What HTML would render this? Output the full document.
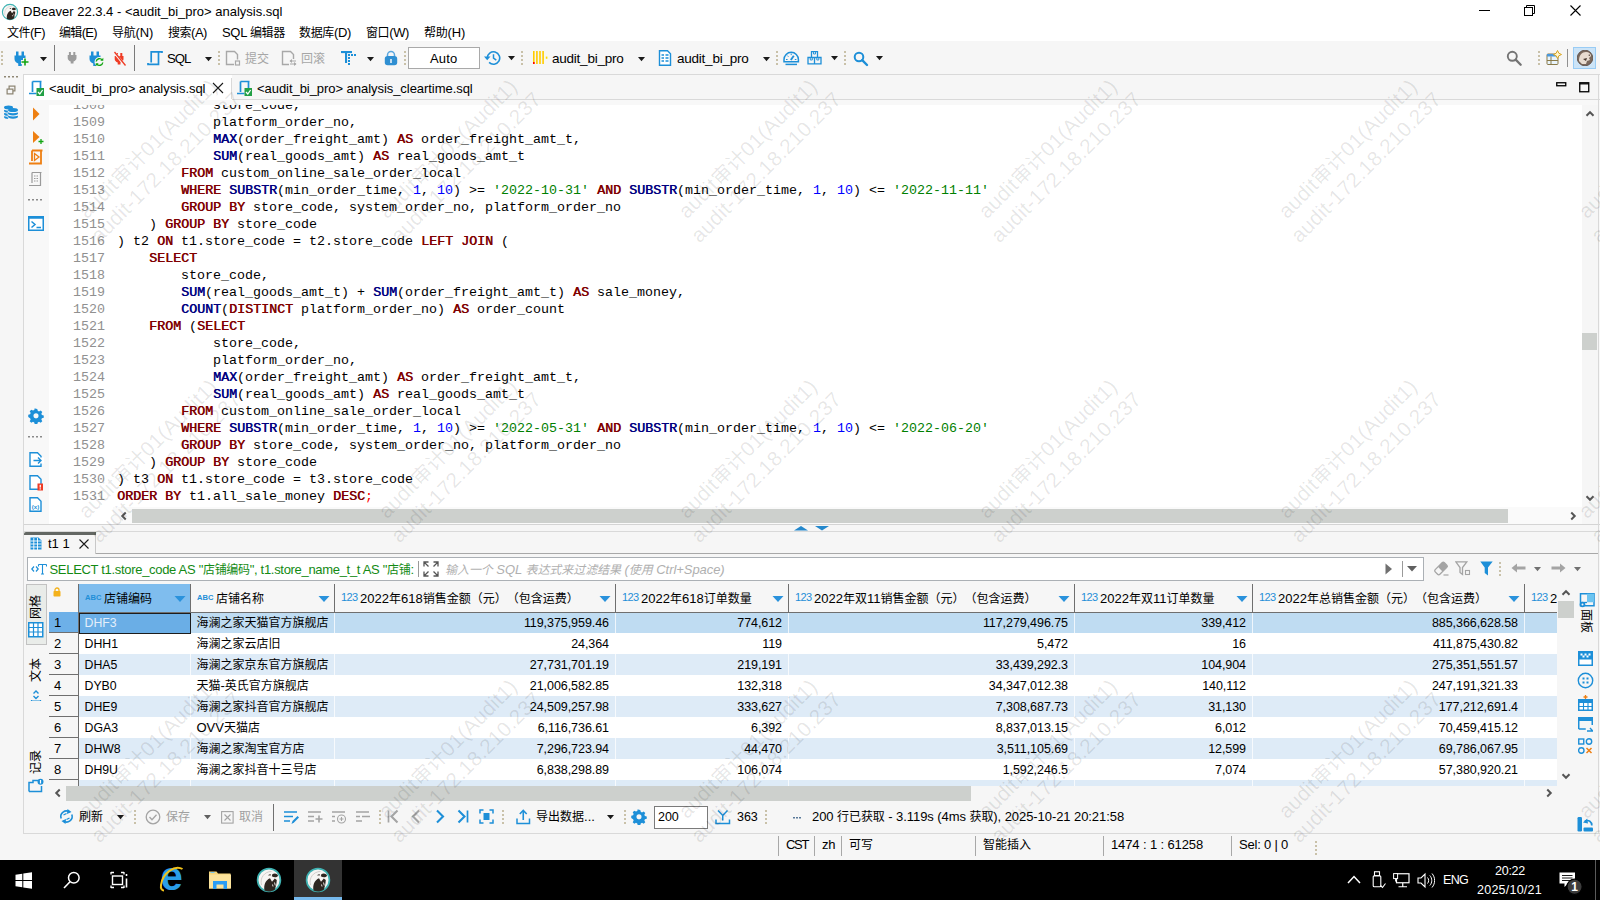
<!DOCTYPE html>
<html lang="zh"><head><meta charset="utf-8"><title>DBeaver 22.3.4 - &lt;audit_bi_pro&gt; analysis.sql</title>
<style>
html,body{margin:0;padding:0}
body{width:1600px;height:900px;overflow:hidden;position:relative;background:#f6f6f6;font-family:"Liberation Sans","Noto Sans CJK SC",sans-serif;font-size:13px;color:#000;text-spacing-trim:space-all}
body div,body svg{position:absolute;box-sizing:border-box}
.t{white-space:pre;font-size:13px}
.c{font-size:12px}
.m{font-family:"Liberation Mono","Noto Sans CJK SC",monospace;font-size:13.333px;white-space:pre}
.kw{color:#7f0000;font-weight:normal;text-shadow:.5px 0 0 currentColor}
.fn{color:#000080;font-weight:normal;text-shadow:.5px 0 0 currentColor}
.nu{color:#0000ff}
.st{color:#008000}
.ln{color:#909090}
.n{font-size:12.5px;letter-spacing:-0.06px}
.wm{width:300px;height:52px;line-height:26px;font-size:20.8px;text-align:center;white-space:pre;color:rgba(0,0,0,.10);transform:rotate(-45deg);letter-spacing:0.3px}
.wc{font-size:20px}

</style></head>
<body>
<!-- title + menu -->
<div style="left:0px;top:0px;width:1600px;height:41px;background:#fff"></div>
<div class="t" style="left:23px;top:2px;height:20px;line-height:20px;letter-spacing:0px">DBeaver 22.3.4 - &lt;audit_bi_pro&gt; analysis.sql</div>
<div class="t" style="left:7px;top:23px;height:20px;line-height:20px;letter-spacing:-0.53px;"><span class="c">文件</span>(F)</div>
<div class="t" style="left:59px;top:23px;height:20px;line-height:20px;letter-spacing:-0.67px;"><span class="c">编辑</span>(E)</div>
<div class="t" style="left:112px;top:23px;height:20px;line-height:20px;letter-spacing:-0.21px;"><span class="c">导航</span>(N)</div>
<div class="t" style="left:168px;top:23px;height:20px;line-height:20px;letter-spacing:-0.47px;"><span class="c">搜索</span>(A)</div>
<div class="t" style="left:222px;top:23px;height:20px;line-height:20px;letter-spacing:-0.31px;">SQL <span class="c">编辑器</span></div>
<div class="t" style="left:299px;top:23px;height:20px;line-height:20px;letter-spacing:-0.34px;"><span class="c">数据库</span>(D)</div>
<div class="t" style="left:366px;top:23px;height:20px;line-height:20px;letter-spacing:-0.39px;"><span class="c">窗口</span>(W)</div>
<div class="t" style="left:424px;top:23px;height:20px;line-height:20px;letter-spacing:-0.21px;"><span class="c">帮助</span>(H)</div>
<!-- toolbar -->
<div style="left:23px;top:74px;width:1577px;height:1px;background:#d9d9d9"></div>
<!-- editor tabs -->
<div style="left:24px;top:75px;width:208px;height:25px;background:#fff"></div>
<div style="left:232px;top:99px;width:1368px;height:1px;background:#d9d9d9"></div>
<div style="left:231px;top:78px;width:1px;height:21px;background:#d9d9d9"></div>
<div class="t" style="left:49px;top:78.6px;height:20px;line-height:20px;letter-spacing:-0.04px;">&lt;audit_bi_pro&gt; analysis.sql</div>
<div class="t" style="left:257px;top:78.6px;height:20px;line-height:20px;letter-spacing:-0.05px;">&lt;audit_bi_pro&gt; analysis_cleartime.sql</div>
<!-- editor -->
<div style="left:23px;top:75px;width:1px;height:759px;background:#d9d9d9"></div>
<div style="left:24px;top:100px;width:1576px;height:424px;background:#f8f8f8"></div>
<div style="left:49px;top:105px;width:1533px;height:402px;background:#fff"></div>
<div style="left:49px;top:507px;width:1533px;height:17px;background:#fff"></div>
<div style="left:1582px;top:105px;width:17px;height:419px;background:#f6f6f6"></div>
<!-- result panel -->
<div style="left:24px;top:531px;width:1576px;height:1px;background:#d9d9d9"></div>
<div style="left:95px;top:553px;width:1504px;height:1px;background:#a8a8a8"></div>
<div style="left:24px;top:833px;width:1576px;height:1px;background:#d9d9d9"></div>
<!-- status bar -->
<!-- taskbar -->
<div style="left:0px;top:860px;width:1600px;height:40px;background:#000"></div>
<!-- code -->
<div style="left:49px;top:105px;width:1533px;height:402px;overflow:hidden">
<div class="m ln" style="left:24px;top:-8.5px;height:17px;line-height:17px">1508</div><div class="m" style="left:68px;top:-8.5px;height:17px;line-height:17px">            store_code,</div>
<div class="m ln" style="left:24px;top:8.5px;height:17px;line-height:17px">1509</div><div class="m" style="left:68px;top:8.5px;height:17px;line-height:17px">            platform_order_no,</div>
<div class="m ln" style="left:24px;top:25.5px;height:17px;line-height:17px">1510</div><div class="m" style="left:68px;top:25.5px;height:17px;line-height:17px">            <b class="fn">MAX</b>(order_freight_amt) <b class="kw">AS</b> order_freight_amt_t,</div>
<div class="m ln" style="left:24px;top:42.5px;height:17px;line-height:17px">1511</div><div class="m" style="left:68px;top:42.5px;height:17px;line-height:17px">            <b class="fn">SUM</b>(real_goods_amt) <b class="kw">AS</b> real_goods_amt_t</div>
<div class="m ln" style="left:24px;top:59.5px;height:17px;line-height:17px">1512</div><div class="m" style="left:68px;top:59.5px;height:17px;line-height:17px">        <b class="kw">FROM</b> custom_online_sale_order_local</div>
<div class="m ln" style="left:24px;top:76.5px;height:17px;line-height:17px">1513</div><div class="m" style="left:68px;top:76.5px;height:17px;line-height:17px">        <b class="kw">WHERE</b> <b class="fn">SUBSTR</b>(min_order_time, <span class="nu">1</span>, <span class="nu">10</span>) &gt;= <span class="st">'2022-10-31'</span> <b class="kw">AND</b> <b class="fn">SUBSTR</b>(min_order_time, <span class="nu">1</span>, <span class="nu">10</span>) &lt;= <span class="st">'2022-11-11'</span></div>
<div class="m ln" style="left:24px;top:93.5px;height:17px;line-height:17px">1514</div><div class="m" style="left:68px;top:93.5px;height:17px;line-height:17px">        <b class="kw">GROUP</b> <b class="kw">BY</b> store_code, system_order_no, platform_order_no</div>
<div class="m ln" style="left:24px;top:110.5px;height:17px;line-height:17px">1515</div><div class="m" style="left:68px;top:110.5px;height:17px;line-height:17px">    ) <b class="kw">GROUP</b> <b class="kw">BY</b> store_code</div>
<div class="m ln" style="left:24px;top:127.5px;height:17px;line-height:17px">1516</div><div class="m" style="left:68px;top:127.5px;height:17px;line-height:17px">) t2 <b class="kw">ON</b> t1.store_code = t2.store_code <b class="kw">LEFT</b> <b class="kw">JOIN</b> (</div>
<div class="m ln" style="left:24px;top:144.5px;height:17px;line-height:17px">1517</div><div class="m" style="left:68px;top:144.5px;height:17px;line-height:17px">    <b class="kw">SELECT</b></div>
<div class="m ln" style="left:24px;top:161.5px;height:17px;line-height:17px">1518</div><div class="m" style="left:68px;top:161.5px;height:17px;line-height:17px">        store_code,</div>
<div class="m ln" style="left:24px;top:178.5px;height:17px;line-height:17px">1519</div><div class="m" style="left:68px;top:178.5px;height:17px;line-height:17px">        <b class="fn">SUM</b>(real_goods_amt_t) + <b class="fn">SUM</b>(order_freight_amt_t) <b class="kw">AS</b> sale_money,</div>
<div class="m ln" style="left:24px;top:195.5px;height:17px;line-height:17px">1520</div><div class="m" style="left:68px;top:195.5px;height:17px;line-height:17px">        <b class="fn">COUNT</b>(<b class="kw">DISTINCT</b> platform_order_no) <b class="kw">AS</b> order_count</div>
<div class="m ln" style="left:24px;top:212.5px;height:17px;line-height:17px">1521</div><div class="m" style="left:68px;top:212.5px;height:17px;line-height:17px">    <b class="kw">FROM</b> (<b class="kw">SELECT</b></div>
<div class="m ln" style="left:24px;top:229.5px;height:17px;line-height:17px">1522</div><div class="m" style="left:68px;top:229.5px;height:17px;line-height:17px">            store_code,</div>
<div class="m ln" style="left:24px;top:246.5px;height:17px;line-height:17px">1523</div><div class="m" style="left:68px;top:246.5px;height:17px;line-height:17px">            platform_order_no,</div>
<div class="m ln" style="left:24px;top:263.5px;height:17px;line-height:17px">1524</div><div class="m" style="left:68px;top:263.5px;height:17px;line-height:17px">            <b class="fn">MAX</b>(order_freight_amt) <b class="kw">AS</b> order_freight_amt_t,</div>
<div class="m ln" style="left:24px;top:280.5px;height:17px;line-height:17px">1525</div><div class="m" style="left:68px;top:280.5px;height:17px;line-height:17px">            <b class="fn">SUM</b>(real_goods_amt) <b class="kw">AS</b> real_goods_amt_t</div>
<div class="m ln" style="left:24px;top:297.5px;height:17px;line-height:17px">1526</div><div class="m" style="left:68px;top:297.5px;height:17px;line-height:17px">        <b class="kw">FROM</b> custom_online_sale_order_local</div>
<div class="m ln" style="left:24px;top:314.5px;height:17px;line-height:17px">1527</div><div class="m" style="left:68px;top:314.5px;height:17px;line-height:17px">        <b class="kw">WHERE</b> <b class="fn">SUBSTR</b>(min_order_time, <span class="nu">1</span>, <span class="nu">10</span>) &gt;= <span class="st">'2022-05-31'</span> <b class="kw">AND</b> <b class="fn">SUBSTR</b>(min_order_time, <span class="nu">1</span>, <span class="nu">10</span>) &lt;= <span class="st">'2022-06-20'</span></div>
<div class="m ln" style="left:24px;top:331.5px;height:17px;line-height:17px">1528</div><div class="m" style="left:68px;top:331.5px;height:17px;line-height:17px">        <b class="kw">GROUP</b> <b class="kw">BY</b> store_code, system_order_no, platform_order_no</div>
<div class="m ln" style="left:24px;top:348.5px;height:17px;line-height:17px">1529</div><div class="m" style="left:68px;top:348.5px;height:17px;line-height:17px">    ) <b class="kw">GROUP</b> <b class="kw">BY</b> store_code</div>
<div class="m ln" style="left:24px;top:365.5px;height:17px;line-height:17px">1530</div><div class="m" style="left:68px;top:365.5px;height:17px;line-height:17px">) t3 <b class="kw">ON</b> t1.store_code = t3.store_code</div>
<div class="m ln" style="left:24px;top:382.5px;height:17px;line-height:17px">1531</div><div class="m" style="left:68px;top:382.5px;height:17px;line-height:17px"><b class="kw">ORDER</b> <b class="kw">BY</b> t1.all_sale_money <b class="kw">DESC</b><span style="color:#f00">;</span></div>
</div>
<!-- editor scrollbars -->
<div style="left:113px;top:507px;width:1469px;height:17px;background:#fafafa"></div>
<div style="left:132px;top:509px;width:1376px;height:14px;background:#cdd0cd"></div>
<svg style="left:115.5px;top:507.5px;" width="16" height="16" viewBox="0 0 16 16"><polyline points="9.75,4.5 6.25,8 9.75,11.5" fill="none" stroke="#555" stroke-width="2"/></svg>
<svg style="left:1564.5px;top:507.5px;" width="16" height="16" viewBox="0 0 16 16"><polyline points="6.25,4.5 9.75,8 6.25,11.5" fill="none" stroke="#555" stroke-width="2"/></svg>
<div style="left:1582px;top:333px;width:15px;height:17px;background:#cdd0cd"></div>
<svg style="left:1582px;top:106px;" width="16" height="16" viewBox="0 0 16 16"><polyline points="4.5,9.75 8,6.25 11.5,9.75" fill="none" stroke="#555" stroke-width="2"/></svg>
<svg style="left:1582px;top:490px;" width="16" height="16" viewBox="0 0 16 16"><polyline points="4.5,6.25 8,9.75 11.5,6.25" fill="none" stroke="#555" stroke-width="2"/></svg>
<div style="left:24px;top:524px;width:1576px;height:1px;background:#d4d4d4"></div>
<div style="left:1598px;top:75px;width:1px;height:759px;background:#d9d9d9"></div>
<!-- result tab -->
<div style="left:24px;top:532px;width:72px;height:22px;background:#f6f6f6;border-right:1px solid #c8c8c8"></div>
<div style="left:24px;top:532px;width:71.5px;height:2.5px;background:#636763;border-radius:2px 0 0 0"></div>
<div class="t" style="left:48px;top:534px;height:20px;line-height:20px;">t1 1</div>
<!-- filter row -->
<div style="left:27px;top:557px;width:1397px;height:24px;background:#fff;border:1px solid #abb0b5"></div>
<div class="t" style="left:49.5px;top:559.5px;height:20px;line-height:20px;color:#138a13;letter-spacing:-0.31px;">SELECT t1.store_code AS "<span class="c">店铺编码</span>", t1.store_name_t_t AS "<span class="c">店铺</span>:</div>
<div class="t" style="left:445px;top:559.5px;height:20px;line-height:20px;color:#b0b0b0;font-style:italic;letter-spacing:-0.06px;"><span class="c">输入一个</span> SQL <span class="c">表达式来过滤结果</span> (<span class="c">使用</span> Ctrl+Space)</div>
<!-- grid -->
<div style="left:0;top:584px;width:1557px;height:201.5px;overflow:hidden">
<div style="left:78px;top:0px;width:112px;height:28px;background:#7fbdee"></div>
<div class="t" style="left:85px;top:4px;height:20px;line-height:20px;font-size:7.6px;font-weight:bold;color:#1f8fd8;letter-spacing:0px">ABC</div>
<div class="t" style="left:104px;top:4.5px;height:20px;line-height:20px;"><span class="c">店铺编码</span></div>
<svg style="left:174px;top:11px" width="12" height="8" viewBox="0 0 12 8"><path d="M0.5 1h11L6 7z" fill="#2a92dc"/></svg>
<div class="t" style="left:197px;top:4px;height:20px;line-height:20px;font-size:7.6px;font-weight:bold;color:#1f8fd8;letter-spacing:0px">ABC</div>
<div class="t" style="left:216px;top:4.5px;height:20px;line-height:20px;"><span class="c">店铺名称</span></div>
<svg style="left:318px;top:11px" width="12" height="8" viewBox="0 0 12 8"><path d="M0.5 1h11L6 7z" fill="#2a92dc"/></svg>
<div class="t" style="left:341px;top:3px;height:20px;line-height:20px;font-size:11px;color:#1f8fd8;letter-spacing:-0.6px">123</div>
<div class="t" style="left:360px;top:4.5px;height:20px;line-height:20px;">2022<span class="c">年</span>618<span class="c">销售金额（元）（包含运费）</span></div>
<svg style="left:599px;top:11px" width="12" height="8" viewBox="0 0 12 8"><path d="M0.5 1h11L6 7z" fill="#2a92dc"/></svg>
<div class="t" style="left:622px;top:3px;height:20px;line-height:20px;font-size:11px;color:#1f8fd8;letter-spacing:-0.6px">123</div>
<div class="t" style="left:641px;top:4.5px;height:20px;line-height:20px;">2022<span class="c">年</span>618<span class="c">订单数量</span></div>
<svg style="left:772px;top:11px" width="12" height="8" viewBox="0 0 12 8"><path d="M0.5 1h11L6 7z" fill="#2a92dc"/></svg>
<div class="t" style="left:795px;top:3px;height:20px;line-height:20px;font-size:11px;color:#1f8fd8;letter-spacing:-0.6px">123</div>
<div class="t" style="left:814px;top:4.5px;height:20px;line-height:20px;">2022<span class="c">年双</span>11<span class="c">销售金额（元）（包含运费）</span></div>
<svg style="left:1058px;top:11px" width="12" height="8" viewBox="0 0 12 8"><path d="M0.5 1h11L6 7z" fill="#2a92dc"/></svg>
<div class="t" style="left:1081px;top:3px;height:20px;line-height:20px;font-size:11px;color:#1f8fd8;letter-spacing:-0.6px">123</div>
<div class="t" style="left:1100px;top:4.5px;height:20px;line-height:20px;">2022<span class="c">年双</span>11<span class="c">订单数量</span></div>
<svg style="left:1236px;top:11px" width="12" height="8" viewBox="0 0 12 8"><path d="M0.5 1h11L6 7z" fill="#2a92dc"/></svg>
<div class="t" style="left:1259px;top:3px;height:20px;line-height:20px;font-size:11px;color:#1f8fd8;letter-spacing:-0.6px">123</div>
<div class="t" style="left:1278px;top:4.5px;height:20px;line-height:20px;">2022<span class="c">年总销售金额（元）（包含运费）</span></div>
<svg style="left:1508px;top:11px" width="12" height="8" viewBox="0 0 12 8"><path d="M0.5 1h11L6 7z" fill="#2a92dc"/></svg>
<div class="t" style="left:1531px;top:3px;height:20px;line-height:20px;font-size:11px;color:#1f8fd8;letter-spacing:-0.6px">123</div>
<div class="t" style="left:1550px;top:4.5px;height:20px;line-height:20px;">2</div>
<div style="left:78px;top:28px;width:1479px;height:21px;background:#bfdcf2"></div>
<div style="left:49px;top:28px;width:29px;height:21px;background:#6db0e8;border-bottom:1px solid #6f6f6f"></div>
<div class="t" style="left:54px;top:29px;height:20px;line-height:20px;">1</div>
<div class="t" style="left:84.5px;top:29px;height:20px;line-height:20px;color:#e4eefa;font-size:12.3px">DHF3</div>
<div class="t" style="left:196.5px;top:29px;height:20px;line-height:20px;"><span class="c">海澜之家天猫官方旗舰店</span></div>
<div class="t n" style="left:409px;width:200px;text-align:right;top:29px;height:20px;line-height:20px;">119,375,959.46</div>
<div class="t n" style="left:582px;width:200px;text-align:right;top:29px;height:20px;line-height:20px;">774,612</div>
<div class="t n" style="left:868px;width:200px;text-align:right;top:29px;height:20px;line-height:20px;">117,279,496.75</div>
<div class="t n" style="left:1046px;width:200px;text-align:right;top:29px;height:20px;line-height:20px;">339,412</div>
<div class="t n" style="left:1318px;width:200px;text-align:right;top:29px;height:20px;line-height:20px;">885,366,628.58</div>
<div style="left:78px;top:49px;width:1479px;height:21px;background:#fff"></div>
<div style="left:49px;top:49px;width:29px;height:21px;background:#f6f6f6;border-bottom:1px solid #6f6f6f"></div>
<div class="t" style="left:54px;top:50px;height:20px;line-height:20px;">2</div>
<div class="t" style="left:84.5px;top:50px;height:20px;line-height:20px;font-size:12.3px">DHH1</div>
<div class="t" style="left:196.5px;top:50px;height:20px;line-height:20px;"><span class="c">海澜之家云店旧</span></div>
<div class="t n" style="left:409px;width:200px;text-align:right;top:50px;height:20px;line-height:20px;">24,364</div>
<div class="t n" style="left:582px;width:200px;text-align:right;top:50px;height:20px;line-height:20px;">119</div>
<div class="t n" style="left:868px;width:200px;text-align:right;top:50px;height:20px;line-height:20px;">5,472</div>
<div class="t n" style="left:1046px;width:200px;text-align:right;top:50px;height:20px;line-height:20px;">16</div>
<div class="t n" style="left:1318px;width:200px;text-align:right;top:50px;height:20px;line-height:20px;">411,875,430.82</div>
<div style="left:78px;top:70px;width:1479px;height:21px;background:#deebf7"></div>
<div style="left:49px;top:70px;width:29px;height:21px;background:#f6f6f6;border-bottom:1px solid #6f6f6f"></div>
<div class="t" style="left:54px;top:71px;height:20px;line-height:20px;">3</div>
<div class="t" style="left:84.5px;top:71px;height:20px;line-height:20px;font-size:12.3px">DHA5</div>
<div class="t" style="left:196.5px;top:71px;height:20px;line-height:20px;"><span class="c">海澜之家京东官方旗舰店</span></div>
<div class="t n" style="left:409px;width:200px;text-align:right;top:71px;height:20px;line-height:20px;">27,731,701.19</div>
<div class="t n" style="left:582px;width:200px;text-align:right;top:71px;height:20px;line-height:20px;">219,191</div>
<div class="t n" style="left:868px;width:200px;text-align:right;top:71px;height:20px;line-height:20px;">33,439,292.3</div>
<div class="t n" style="left:1046px;width:200px;text-align:right;top:71px;height:20px;line-height:20px;">104,904</div>
<div class="t n" style="left:1318px;width:200px;text-align:right;top:71px;height:20px;line-height:20px;">275,351,551.57</div>
<div style="left:78px;top:91px;width:1479px;height:21px;background:#fff"></div>
<div style="left:49px;top:91px;width:29px;height:21px;background:#f6f6f6;border-bottom:1px solid #6f6f6f"></div>
<div class="t" style="left:54px;top:92px;height:20px;line-height:20px;">4</div>
<div class="t" style="left:84.5px;top:92px;height:20px;line-height:20px;font-size:12.3px">DYB0</div>
<div class="t" style="left:196.5px;top:92px;height:20px;line-height:20px;"><span class="c">天猫</span>-<span class="c">英氏官方旗舰店</span></div>
<div class="t n" style="left:409px;width:200px;text-align:right;top:92px;height:20px;line-height:20px;">21,006,582.85</div>
<div class="t n" style="left:582px;width:200px;text-align:right;top:92px;height:20px;line-height:20px;">132,318</div>
<div class="t n" style="left:868px;width:200px;text-align:right;top:92px;height:20px;line-height:20px;">34,347,012.38</div>
<div class="t n" style="left:1046px;width:200px;text-align:right;top:92px;height:20px;line-height:20px;">140,112</div>
<div class="t n" style="left:1318px;width:200px;text-align:right;top:92px;height:20px;line-height:20px;">247,191,321.33</div>
<div style="left:78px;top:112px;width:1479px;height:21px;background:#deebf7"></div>
<div style="left:49px;top:112px;width:29px;height:21px;background:#f6f6f6;border-bottom:1px solid #6f6f6f"></div>
<div class="t" style="left:54px;top:113px;height:20px;line-height:20px;">5</div>
<div class="t" style="left:84.5px;top:113px;height:20px;line-height:20px;font-size:12.3px">DHE9</div>
<div class="t" style="left:196.5px;top:113px;height:20px;line-height:20px;"><span class="c">海澜之家抖音官方旗舰店</span></div>
<div class="t n" style="left:409px;width:200px;text-align:right;top:113px;height:20px;line-height:20px;">24,509,257.98</div>
<div class="t n" style="left:582px;width:200px;text-align:right;top:113px;height:20px;line-height:20px;">333,627</div>
<div class="t n" style="left:868px;width:200px;text-align:right;top:113px;height:20px;line-height:20px;">7,308,687.73</div>
<div class="t n" style="left:1046px;width:200px;text-align:right;top:113px;height:20px;line-height:20px;">31,130</div>
<div class="t n" style="left:1318px;width:200px;text-align:right;top:113px;height:20px;line-height:20px;">177,212,691.4</div>
<div style="left:78px;top:133px;width:1479px;height:21px;background:#fff"></div>
<div style="left:49px;top:133px;width:29px;height:21px;background:#f6f6f6;border-bottom:1px solid #6f6f6f"></div>
<div class="t" style="left:54px;top:134px;height:20px;line-height:20px;">6</div>
<div class="t" style="left:84.5px;top:134px;height:20px;line-height:20px;font-size:12.3px">DGA3</div>
<div class="t" style="left:196.5px;top:134px;height:20px;line-height:20px;">OVV<span class="c">天猫店</span></div>
<div class="t n" style="left:409px;width:200px;text-align:right;top:134px;height:20px;line-height:20px;">6,116,736.61</div>
<div class="t n" style="left:582px;width:200px;text-align:right;top:134px;height:20px;line-height:20px;">6,392</div>
<div class="t n" style="left:868px;width:200px;text-align:right;top:134px;height:20px;line-height:20px;">8,837,013.15</div>
<div class="t n" style="left:1046px;width:200px;text-align:right;top:134px;height:20px;line-height:20px;">6,012</div>
<div class="t n" style="left:1318px;width:200px;text-align:right;top:134px;height:20px;line-height:20px;">70,459,415.12</div>
<div style="left:78px;top:154px;width:1479px;height:21px;background:#deebf7"></div>
<div style="left:49px;top:154px;width:29px;height:21px;background:#f6f6f6;border-bottom:1px solid #6f6f6f"></div>
<div class="t" style="left:54px;top:155px;height:20px;line-height:20px;">7</div>
<div class="t" style="left:84.5px;top:155px;height:20px;line-height:20px;font-size:12.3px">DHW8</div>
<div class="t" style="left:196.5px;top:155px;height:20px;line-height:20px;"><span class="c">海澜之家淘宝官方店</span></div>
<div class="t n" style="left:409px;width:200px;text-align:right;top:155px;height:20px;line-height:20px;">7,296,723.94</div>
<div class="t n" style="left:582px;width:200px;text-align:right;top:155px;height:20px;line-height:20px;">44,470</div>
<div class="t n" style="left:868px;width:200px;text-align:right;top:155px;height:20px;line-height:20px;">3,511,105.69</div>
<div class="t n" style="left:1046px;width:200px;text-align:right;top:155px;height:20px;line-height:20px;">12,599</div>
<div class="t n" style="left:1318px;width:200px;text-align:right;top:155px;height:20px;line-height:20px;">69,786,067.95</div>
<div style="left:78px;top:175px;width:1479px;height:21px;background:#fff"></div>
<div style="left:49px;top:175px;width:29px;height:21px;background:#f6f6f6;border-bottom:1px solid #6f6f6f"></div>
<div class="t" style="left:54px;top:176px;height:20px;line-height:20px;">8</div>
<div class="t" style="left:84.5px;top:176px;height:20px;line-height:20px;font-size:12.3px">DH9U</div>
<div class="t" style="left:196.5px;top:176px;height:20px;line-height:20px;"><span class="c">海澜之家抖音十三号店</span></div>
<div class="t n" style="left:409px;width:200px;text-align:right;top:176px;height:20px;line-height:20px;">6,838,298.89</div>
<div class="t n" style="left:582px;width:200px;text-align:right;top:176px;height:20px;line-height:20px;">106,074</div>
<div class="t n" style="left:868px;width:200px;text-align:right;top:176px;height:20px;line-height:20px;">1,592,246.5</div>
<div class="t n" style="left:1046px;width:200px;text-align:right;top:176px;height:20px;line-height:20px;">7,074</div>
<div class="t n" style="left:1318px;width:200px;text-align:right;top:176px;height:20px;line-height:20px;">57,380,920.21</div>
<div style="left:78px;top:196px;width:1479px;height:21px;background:#deebf7"></div>
<div style="left:49px;top:196px;width:29px;height:21px;background:#f6f6f6;border-bottom:1px solid #6f6f6f"></div>
<div class="t" style="left:84.5px;top:197px;height:20px;line-height:20px;font-size:12.3px"></div>
<div class="t" style="left:196.5px;top:197px;height:20px;line-height:20px;"></div>
<div class="t n" style="left:409px;width:200px;text-align:right;top:197px;height:20px;line-height:20px;"></div>
<div class="t n" style="left:582px;width:200px;text-align:right;top:197px;height:20px;line-height:20px;"></div>
<div class="t n" style="left:868px;width:200px;text-align:right;top:197px;height:20px;line-height:20px;"></div>
<div class="t n" style="left:1046px;width:200px;text-align:right;top:197px;height:20px;line-height:20px;"></div>
<div class="t n" style="left:1318px;width:200px;text-align:right;top:197px;height:20px;line-height:20px;"></div>
<div style="left:190px;top:28px;width:1px;height:200px;background:rgba(255,255,255,.75)"></div>
<div style="left:334px;top:28px;width:1px;height:200px;background:rgba(255,255,255,.75)"></div>
<div style="left:615px;top:28px;width:1px;height:200px;background:rgba(255,255,255,.75)"></div>
<div style="left:788px;top:28px;width:1px;height:200px;background:rgba(255,255,255,.75)"></div>
<div style="left:1074px;top:28px;width:1px;height:200px;background:rgba(255,255,255,.75)"></div>
<div style="left:1252px;top:28px;width:1px;height:200px;background:rgba(255,255,255,.75)"></div>
<div style="left:1524px;top:28px;width:1px;height:200px;background:rgba(255,255,255,.75)"></div>
<div style="left:78px;top:0px;width:1px;height:28px;background:#6f6f6f"></div>
<div style="left:190px;top:0px;width:1px;height:28px;background:#6f6f6f"></div>
<div style="left:334px;top:0px;width:1px;height:28px;background:#6f6f6f"></div>
<div style="left:615px;top:0px;width:1px;height:28px;background:#6f6f6f"></div>
<div style="left:788px;top:0px;width:1px;height:28px;background:#6f6f6f"></div>
<div style="left:1074px;top:0px;width:1px;height:28px;background:#6f6f6f"></div>
<div style="left:1252px;top:0px;width:1px;height:28px;background:#6f6f6f"></div>
<div style="left:1524px;top:0px;width:1px;height:28px;background:#6f6f6f"></div>
<div style="left:78px;top:28px;width:1px;height:200px;background:#6f6f6f"></div>
<div style="left:78px;top:27.5px;width:1479px;height:1.5px;background:#6f6f6f"></div>
<div style="left:79px;top:28.5px;width:111.5px;height:21px;background:#6aaee6;border:1.5px solid #1c1c1c"></div>
<div class="t" style="left:84.5px;top:29px;height:20px;line-height:20px;color:#e4eefa;font-size:12.3px">DHF3</div>
</div>
<!-- grid scrollbars -->
<div style="left:1558px;top:601px;width:16px;height:17px;background:#cdd0cd"></div>
<svg style="left:1557.5px;top:585px;" width="16" height="16" viewBox="0 0 16 16"><polyline points="4.5,9.75 8,6.25 11.5,9.75" fill="none" stroke="#555" stroke-width="2"/></svg>
<svg style="left:1557.5px;top:768px;" width="16" height="16" viewBox="0 0 16 16"><polyline points="4.5,6.25 8,9.75 11.5,6.25" fill="none" stroke="#555" stroke-width="2"/></svg>
<div style="left:66px;top:786px;width:905px;height:15px;background:#cdd0cd"></div>
<svg style="left:49.5px;top:785px;" width="16" height="16" viewBox="0 0 16 16"><polyline points="9.75,4.5 6.25,8 9.75,11.5" fill="none" stroke="#555" stroke-width="2"/></svg>
<svg style="left:1540.5px;top:785px;" width="16" height="16" viewBox="0 0 16 16"><polyline points="6.25,4.5 9.75,8 6.25,11.5" fill="none" stroke="#555" stroke-width="2"/></svg>
<!-- main toolbar -->
<svg style="left:1px;top:51px;" width="2" height="16" viewBox="0 0 2 16"><rect x="0" y="0" width="2" height="2" fill="#c9c1a9"/><rect x="0" y="4" width="2" height="2" fill="#c9c1a9"/><rect x="0" y="8" width="2" height="2" fill="#c9c1a9"/><rect x="0" y="12" width="2" height="2" fill="#c9c1a9"/></svg>
<svg style="left:13px;top:51px;" width="16" height="16" viewBox="0 0 16 16"><path d="M3 0.500h2.500v4h3v-4h2.500v4h1.500v3.500c0 2-1.500 3.500-3.750 4.500v2.500h-3.500v-2.500c-2.250-1-3.750-2.500-3.750-4.500v-3.500h1.500z" fill="#1d8fd8"/><path d="M8 11h8M12 7v8" stroke="#f6f6f6" stroke-width="4"/><path d="M8.500 11h7M12 7.500v7" stroke="#12a512" stroke-width="1.6"/></svg>
<svg style="left:40px;top:57px;" width="7" height="5" viewBox="0 0 7 5"><path d="M0 0h7L3.500 4.300z" fill="#1a1a1a"/></svg>
<div style="left:54px;top:45px;width:1px;height:26px;background:#7a7a7a"></div>
<svg style="left:66px;top:51px;" width="14" height="14" viewBox="0 0 14 14"><path d="M3 0.500h2.500v4h3v-4h2.500v4h1.500v3.500c0 2-1.500 3.500-3.750 4.500v2.500h-3.500v-2.500c-2.250-1-3.750-2.500-3.750-4.500v-3.500h1.500z" fill="#9c9c9c" transform="translate(0.500,0.500) scale(0.800)"/></svg>
<svg style="left:88px;top:51px;" width="16" height="16" viewBox="0 0 16 16"><path d="M3 0.500h2.500v4h3v-4h2.500v4h1.500v3.500c0 2-1.500 3.500-3.750 4.500v2.500h-3.500v-2.500c-2.250-1-3.750-2.500-3.750-4.500v-3.500h1.500z" fill="#1d8fd8"/><circle cx="11.5" cy="11" r="5" fill="#f6f6f6"/><path d="M8.200 10.500a3.400 3.400 0 0 1 6-1.600M14.800 11.500a3.400 3.400 0 0 1-6 1.600" fill="none" stroke="#12a512" stroke-width="1.400"/><path d="M15.300 6.800v3h-3zM7.700 15.200v-3h3z" fill="#12a512"/></svg>
<svg style="left:112px;top:51px;" width="16" height="16" viewBox="0 0 16 16"><path d="M3 0.500h2.500v4h3v-4h2.500v4h1.500v3.500c0 2-1.500 3.500-3.750 4.500v2.500h-3.500v-2.500c-2.250-1-3.750-2.500-3.750-4.500v-3.500h1.500z" fill="#ef3b24" transform="translate(1.500,1.500) scale(0.800)"/><path d="M2 1l11 13.500" stroke="#f6f6f6" stroke-width="2.600"/><path d="M2.500 1l11 13.500" stroke="#ef3b24" stroke-width="1.300"/></svg>
<div style="left:134px;top:45px;width:1px;height:26px;background:#7a7a7a"></div>
<svg style="left:147px;top:51px;" width="16" height="16" viewBox="0 0 16 16"><path d="M15 2V0.850H4.200V11.500M11.500 1v12.300H1V12" fill="none" stroke="#1d8fd8" stroke-width="1.700"/><path d="M0 0" stroke="#1d8fd8"/></svg>
<div class="t" style="left:167px;top:48.5px;height:20px;line-height:20px;font-size:13.2px;letter-spacing:-1.03px;">SQL</div>
<svg style="left:205px;top:57px;" width="7" height="5" viewBox="0 0 7 5"><path d="M0 0h7L3.500 4.300z" fill="#1a1a1a"/></svg>
<svg style="left:218px;top:51px;" width="2" height="16" viewBox="0 0 2 16"><rect x="0" y="0" width="2" height="2" fill="#c9c1a9"/><rect x="0" y="4" width="2" height="2" fill="#c9c1a9"/><rect x="0" y="8" width="2" height="2" fill="#c9c1a9"/><rect x="0" y="12" width="2" height="2" fill="#c9c1a9"/></svg>
<svg style="left:225px;top:50px;" width="16" height="16" viewBox="0 0 16 16"><path d="M1.500 1.500h8l3 3v10h-11z" fill="none" stroke="#a8a8a8" stroke-width="1.400"/><rect x="9" y="9.500" width="7" height="6.500" fill="#f6f6f6"/><rect x="10.500" y="11" width="4" height="4" fill="none" stroke="#a8a8a8" stroke-width="1.200"/></svg>
<div class="t" style="left:245px;top:48.5px;height:20px;line-height:20px;color:#a6a6a6"><span class="c">提交</span></div>
<svg style="left:281px;top:50px;" width="16" height="16" viewBox="0 0 16 16"><path d="M1.500 1.500h8l3 3v10h-11z" fill="none" stroke="#a8a8a8" stroke-width="1.400"/><rect x="8" y="9" width="8" height="7" fill="#f6f6f6"/><path d="M9 11h6M9 14h6" stroke="#a8a8a8" stroke-width="1.100"/><path d="M11 9l-2.500 2 2.500 2zM13 12l2.500 2-2.500 2z" fill="#a8a8a8"/></svg>
<div class="t" style="left:301px;top:48.5px;height:20px;line-height:20px;color:#a6a6a6"><span class="c">回滚</span></div>
<svg style="left:341px;top:51px;" width="16" height="15" viewBox="0 0 16 15"><g fill="#1d8fd8"><rect x="0" y="0" width="11" height="2.100"/><rect x="4" y="0" width="2.100" height="12"/><rect x="7" y="3" width="2" height="2"/><rect x="10" y="3" width="2" height="2"/><rect x="13" y="3" width="2" height="2"/><rect x="7" y="6" width="2" height="2"/><rect x="7" y="9" width="2" height="2"/><rect x="7" y="12" width="2" height="2"/></g></svg>
<svg style="left:367px;top:57px;" width="7" height="5" viewBox="0 0 7 5"><path d="M0 0h7L3.500 4.300z" fill="#1a1a1a"/></svg>
<svg style="left:384px;top:50px;" width="14" height="16" viewBox="0 0 14 16"><path d="M3.500 6.500V5a3.500 3.500 0 0 1 7 0v1.500" fill="none" stroke="#5aa6de" stroke-width="1.500"/><rect x="0.800" y="6" width="12.400" height="9.300" rx="2.800" fill="#2f8fd2"/><rect x="6.200" y="9" width="1.600" height="4" fill="#e8f2fa"/></svg>
<svg style="left:404px;top:51px;" width="2" height="16" viewBox="0 0 2 16"><rect x="0" y="0" width="2" height="2" fill="#c9c1a9"/><rect x="0" y="4" width="2" height="2" fill="#c9c1a9"/><rect x="0" y="8" width="2" height="2" fill="#c9c1a9"/><rect x="0" y="12" width="2" height="2" fill="#c9c1a9"/></svg>
<div style="left:408px;top:47px;width:72px;height:22px;background:#fff;border:1px solid #a9a9a9"></div>
<div class="t" style="left:430px;top:48.5px;height:20px;line-height:20px;letter-spacing:0.19px;">Auto</div>
<svg style="left:483px;top:50px;" width="18" height="16" viewBox="0 0 18 16"><path d="M4.300 8a6.200 6.200 0 1 1 1.800 4.400" fill="none" stroke="#1d8fd8" stroke-width="1.600"/><path d="M1 6.500h6.500L4.200 10.300z" fill="#1d8fd8"/><path d="M10.500 4.200v4l2.800 2" fill="none" stroke="#1d8fd8" stroke-width="1.500"/></svg>
<svg style="left:508px;top:56px;" width="7" height="5" viewBox="0 0 7 5"><path d="M0 0h7L3.500 4.300z" fill="#1a1a1a"/></svg>
<svg style="left:521px;top:51px;" width="2" height="16" viewBox="0 0 2 16"><rect x="0" y="0" width="2" height="2" fill="#c9c1a9"/><rect x="0" y="4" width="2" height="2" fill="#c9c1a9"/><rect x="0" y="8" width="2" height="2" fill="#c9c1a9"/><rect x="0" y="12" width="2" height="2" fill="#c9c1a9"/></svg>
<svg style="left:533px;top:51px;" width="16" height="14" viewBox="0 0 16 14"><rect x="0" y="0" width="1.600" height="13" fill="#ffcc00"/><rect x="3.1" y="0" width="1.600" height="13" fill="#ffcc00"/><rect x="6.2" y="0" width="1.600" height="13" fill="#ffcc00"/><rect x="9.3" y="0" width="1.600" height="13" fill="#ffcc00"/><rect x="0" y="11" width="1.600" height="2" fill="#f00"/><rect x="12.800" y="5.600" width="1.600" height="2.200" fill="#ffdd00"/></svg>
<div class="t" style="left:552px;top:48.5px;height:20px;line-height:20px;font-size:13.5px;letter-spacing:-0.23px;">audit_bi_pro</div>
<svg style="left:638px;top:57px;" width="7" height="5" viewBox="0 0 7 5"><path d="M0 0h7L3.500 4.300z" fill="#1a1a1a"/></svg>
<svg style="left:658px;top:50px;" width="14" height="16" viewBox="0 0 14 16"><path d="M1.500 0.800h8l3 3V15.200h-11z" fill="#fff" stroke="#1d8fd8" stroke-width="1.400"/><path d="M3.500 5h2.500M3.500 8h2.500M3.500 11h2.500M7.500 5h3M7.500 8h3M7.500 11h3" stroke="#1d8fd8" stroke-width="1.500"/></svg>
<div class="t" style="left:677px;top:48.5px;height:20px;line-height:20px;font-size:13.5px;letter-spacing:-0.23px;">audit_bi_pro</div>
<svg style="left:763px;top:57px;" width="7" height="5" viewBox="0 0 7 5"><path d="M0 0h7L3.500 4.300z" fill="#1a1a1a"/></svg>
<svg style="left:776px;top:51px;" width="2" height="16" viewBox="0 0 2 16"><rect x="0" y="0" width="2" height="2" fill="#c9c1a9"/><rect x="0" y="4" width="2" height="2" fill="#c9c1a9"/><rect x="0" y="8" width="2" height="2" fill="#c9c1a9"/><rect x="0" y="12" width="2" height="2" fill="#c9c1a9"/></svg>
<svg style="left:783px;top:51px;" width="17" height="15" viewBox="0 0 17 15"><path d="M1 10.800V8.500a7.200 7.200 0 0 1 14.400 0v2.300z" fill="none" stroke="#1d8fd8" stroke-width="1.500"/><path d="M2.500 13.400h11.500" stroke="#1d8fd8" stroke-width="1.500"/><path d="M7.800 9l3-4.300" stroke="#1d8fd8" stroke-width="1.900"/><path d="M8.200 2.500v1.600M3 8.500h1.600M13.400 8.500h-1.600M4.300 4.600l1.100 1.100" stroke="#1d8fd8" stroke-width="1"/></svg>
<svg style="left:807px;top:51px;" width="15" height="14" viewBox="0 0 15 14"><path d="M4.500 0.700h6v5.800h-6zM1 6.500h6.500v6.300H1zM7.500 6.500h6.500v6.300H7.500z" fill="none" stroke="#1d8fd8" stroke-width="1.300"/><path d="M6.500 1v2h2V1M3.300 7v2h2V7M9.800 7v2h2V7" fill="none" stroke="#1d8fd8" stroke-width="0.900"/></svg>
<svg style="left:831px;top:56px;" width="7" height="5" viewBox="0 0 7 5"><path d="M0 0h7L3.500 4.300z" fill="#1a1a1a"/></svg>
<svg style="left:844px;top:51px;" width="2" height="16" viewBox="0 0 2 16"><rect x="0" y="0" width="2" height="2" fill="#c9c1a9"/><rect x="0" y="4" width="2" height="2" fill="#c9c1a9"/><rect x="0" y="8" width="2" height="2" fill="#c9c1a9"/><rect x="0" y="12" width="2" height="2" fill="#c9c1a9"/></svg>
<svg style="left:852.5px;top:50.5px;" width="16" height="16" viewBox="0 0 16 16"><circle cx="6" cy="6" r="4.300" fill="none" stroke="#1d8fd8" stroke-width="2"/><path d="M9.200 9.200L14 14" stroke="#1d8fd8" stroke-width="2.4" stroke-linecap="round"/></svg>
<svg style="left:876px;top:56px;" width="7" height="5" viewBox="0 0 7 5"><path d="M0 0h7L3.500 4.300z" fill="#1a1a1a"/></svg>
<svg style="left:1506px;top:50px;" width="16.8" height="16.8" viewBox="0 0 16 16"><circle cx="6" cy="6" r="4.300" fill="none" stroke="#747474" stroke-width="1.8"/><path d="M9.200 9.200L14 14" stroke="#747474" stroke-width="2.2" stroke-linecap="round"/></svg>
<svg style="left:1538px;top:51px;" width="2" height="16" viewBox="0 0 2 16"><rect x="0" y="0" width="2" height="2" fill="#c9c1a9"/><rect x="0" y="4" width="2" height="2" fill="#c9c1a9"/><rect x="0" y="8" width="2" height="2" fill="#c9c1a9"/><rect x="0" y="12" width="2" height="2" fill="#c9c1a9"/></svg>
<svg style="left:1546px;top:50px;" width="16" height="16" viewBox="0 0 16 16"><rect x="1" y="4" width="11" height="10.500" rx="1" fill="#e8f4fc" stroke="#8a7a4a" stroke-width="1"/><rect x="1" y="4" width="11" height="2.500" fill="#4a98dc"/><path d="M5 6.500v8M1 10.500h11" stroke="#8a7a4a" stroke-width="1"/><path d="M11.500 0.500l1.300 2.700 2.700 1.300-2.700 1.300-1.300 2.700-1.300-2.700-2.700-1.300 2.700-1.300z" fill="#fff8d0" stroke="#d9a520" stroke-width="1"/></svg>
<div style="left:1567px;top:49px;width:1px;height:18px;background:#909090"></div>
<div style="left:1573px;top:47px;width:23px;height:22px;background:#cce4f7;border:1px solid #99ccf5"></div>
<svg style="left:1577px;top:50px;" width="16" height="16" viewBox="0 0 16 16"><circle cx="8" cy="8" r="7.800" fill="#7a685c"/><path d="M2 11C2 5 5 2 9 2c3 0 5 2 5 4l-2 2 1 2-3 1-1 3-4 0z" fill="#e8dcd0"/><path d="M6 9l4-1-1 3zM11 5l2-.5v1.500z" fill="#4a3a30"/><circle cx="8" cy="8" r="7.800" fill="none" stroke="#5a4a40" stroke-width=".8"/></svg>
<svg style="left:1479px;top:9.5px;" width="11" height="1" viewBox="0 0 11 1"><rect width="11" height="1" fill="#000"/></svg>
<svg style="left:1523px;top:4px;" width="12" height="12" viewBox="0 0 12 12"><path d="M3.500 3.500V1.500h8v8h-2" fill="none" stroke="#000" stroke-width="1"/><rect x="1.500" y="3.500" width="8" height="8" fill="#fff" stroke="#000" stroke-width="1"/></svg>
<svg style="left:1570px;top:5px;" width="11" height="11" viewBox="0 0 11 11"><path d="M0.500 0.500l10 10M10.500 0.500l-10 10" stroke="#000" stroke-width="1.100"/></svg>
<!-- left strip -->
<svg style="left:4px;top:76px;" width="16" height="2" viewBox="0 0 16 2"><rect x="0" y="0" width="2" height="1.500" fill="#8f8775"/><rect x="4" y="0" width="2" height="1.500" fill="#8f8775"/><rect x="8" y="0" width="2" height="1.500" fill="#8f8775"/><rect x="12" y="0" width="2" height="1.500" fill="#8f8775"/></svg>
<svg style="left:6px;top:85px;" width="10" height="10" viewBox="0 0 10 10"><rect x="3.100" y="1.100" width="5.800" height="4.800" fill="none" stroke="#8a8270" stroke-width="1.200"/><rect x="1.100" y="4.100" width="5.800" height="4.800" fill="#f6f6f6" stroke="#8a8270" stroke-width="1.200"/></svg>
<svg style="left:3px;top:104px;" width="16" height="16" viewBox="0 0 16 16"><ellipse cx="5.5" cy="14" rx="4.8" ry="2.025" fill="#f6f6f6"/><ellipse cx="5.5" cy="13.1" rx="4.5" ry="1.89" fill="#1d8fd8"/><ellipse cx="5.5" cy="10.8" rx="4.8" ry="2.025" fill="#f6f6f6"/><ellipse cx="5.5" cy="9.9" rx="4.5" ry="1.89" fill="#1d8fd8"/><ellipse cx="5.5" cy="7.6" rx="4.8" ry="2.025" fill="#f6f6f6"/><ellipse cx="5.5" cy="6.7" rx="4.5" ry="1.89" fill="#1d8fd8"/><ellipse cx="5.5" cy="4.4" rx="4.8" ry="2.025" fill="#f6f6f6"/><ellipse cx="5.5" cy="3.5" rx="4.5" ry="1.89" fill="#1d8fd8"/><ellipse cx="10" cy="13.5" rx="5.3" ry="2.25" fill="#f6f6f6"/><ellipse cx="10" cy="12.6" rx="5" ry="2.1" fill="#1d8fd8"/><ellipse cx="10" cy="10.2" rx="5.3" ry="2.25" fill="#f6f6f6"/><ellipse cx="10" cy="9.3" rx="5" ry="2.1" fill="#1d8fd8"/><ellipse cx="10" cy="6.9" rx="5.3" ry="2.25" fill="#f6f6f6"/><ellipse cx="10" cy="6" rx="5" ry="2.1" fill="#1d8fd8"/></svg>
<svg style="left:28px;top:80px;" width="17" height="17" viewBox="0 0 17 17"><path d="M4.500 1.500h9M12.500 1.500v8M4.500 1.500v10.500M1 13.500h7.500" fill="none" stroke="#1d8fd8" stroke-width="1.700"/><rect x="8.500" y="8" width="7.500" height="8" fill="#22a045"/><path d="M10 12l1.800 2 2.800-4" fill="none" stroke="#fff" stroke-width="1.300"/></svg>
<svg style="left:236px;top:80px;" width="17" height="17" viewBox="0 0 17 17"><path d="M4.500 1.500h9M12.500 1.500v8M4.500 1.500v10.500M1 13.500h7.500" fill="none" stroke="#1d8fd8" stroke-width="1.700"/><rect x="8.500" y="8" width="7.500" height="8" fill="#22a045"/><path d="M10 12l1.800 2 2.800-4" fill="none" stroke="#fff" stroke-width="1.300"/></svg>
<svg style="left:212px;top:82px;" width="12" height="12" viewBox="0 0 12 12"><path d="M1 1l10 10M11 1L1 11" stroke="#1a1a1a" stroke-width="1.100"/></svg>
<svg style="left:1556px;top:82px;" width="11" height="5" viewBox="0 0 11 5"><rect x="0.750" y="0.750" width="9" height="3" fill="none" stroke="#000" stroke-width="1.300"/></svg>
<svg style="left:1579px;top:82px;" width="11" height="11" viewBox="0 0 11 11"><rect x="0.750" y="0.750" width="9" height="9" fill="none" stroke="#000" stroke-width="1.300"/><path d="M0.750 1.800h9" stroke="#000" stroke-width="1.300"/></svg>
<!-- editor side toolbar -->
<svg style="left:32px;top:106px;" width="9" height="16" viewBox="0 0 9 16"><path d="M1 1.500l6.500 6.500L1 14.500z" fill="#ee7f12"/></svg>
<svg style="left:32px;top:130px;" width="13" height="15" viewBox="0 0 13 15"><path d="M1 1l6.500 6L1 13z" fill="#ee7f12"/><path d="M6.500 11.500h5M9 9v5" stroke="#12a512" stroke-width="1.300"/></svg>
<svg style="left:28px;top:149px;" width="16" height="17" viewBox="0 0 16 17"><path d="M4 1.500h10.500M13 1.500v13H2M4 1.500v10.500M1 14.500h11" fill="none" stroke="#ee7f12" stroke-width="1.800"/><path d="M6.500 4.500l4.500 3.500-4.500 3.500z" fill="none" stroke="#ee7f12" stroke-width="1.300"/></svg>
<svg style="left:28px;top:171px;" width="16" height="17" viewBox="0 0 16 17"><path d="M4 1.500h9.500M12.500 1.500v13H2M4 1.500v10.500M1 14.500h10.500" fill="none" stroke="#9a9a9a" stroke-width="1.200"/><path d="M6 5h5M6 7.500h5M6 10h5" stroke="#9a9a9a" stroke-width="1" stroke-dasharray="1.500 1"/></svg>
<svg style="left:28px;top:199px;" width="16" height="2" viewBox="0 0 16 2"><rect x="0" y="0" width="2" height="1.500" fill="#8a8a8a"/><rect x="4" y="0" width="2" height="1.500" fill="#8a8a8a"/><rect x="8" y="0" width="2" height="1.500" fill="#8a8a8a"/><rect x="12" y="0" width="2" height="1.500" fill="#8a8a8a"/></svg>
<svg style="left:28px;top:216px;" width="16" height="15" viewBox="0 0 16 15"><rect x="0.750" y="0.750" width="14.500" height="13.500" fill="#fff" stroke="#1d8fd8" stroke-width="1.500"/><rect x="0.750" y="0.750" width="14.500" height="2" fill="#1d8fd8"/><path d="M3.500 5.500l3.500 3-3.500 3M8.500 11.500h4.500" fill="none" stroke="#1d8fd8" stroke-width="1.500"/></svg>
<svg style="left:28px;top:408px;" width="16" height="16" viewBox="0 0 16 16.500"><path d="M8 0.800l1.300 0.200.5 1.900 1.300.6 1.700-1 1.700 1.700-1 1.700.6 1.300 1.900.5v2.400l-1.900.5-.6 1.300 1 1.700-1.700 1.700-1.700-1-1.300.6-.5 1.900H6.700l-.5-1.900-1.300-.6-1.700 1-1.700-1.700 1-1.700-.6-1.300L0 9.300V6.900l1.900-.5.6-1.300-1-1.700 1.700-1.700 1.700 1 1.300-.6.500-1.900z" fill="#1d8fd8"/><circle cx="8" cy="8.100" r="2.600" fill="#f8f8f8"/></svg>
<svg style="left:28px;top:436px;" width="16" height="2" viewBox="0 0 16 2"><rect x="0" y="0" width="2" height="1.500" fill="#8a8a8a"/><rect x="4" y="0" width="2" height="1.500" fill="#8a8a8a"/><rect x="8" y="0" width="2" height="1.500" fill="#8a8a8a"/><rect x="12" y="0" width="2" height="1.500" fill="#8a8a8a"/></svg>
<svg style="left:29px;top:452px;" width="15" height="15" viewBox="0 0 15 15"><path d="M1 0.750h7.500l3.500 3.500V14.250H1z" fill="#fff" stroke="#1d8fd8" stroke-width="1.400"/><rect x="5" y="5.500" width="10" height="6" fill="#fff"/><path d="M4.500 8.500h7M9 5.500l3 3-3 3" fill="none" stroke="#1d8fd8" stroke-width="1.400"/></svg>
<svg style="left:29px;top:475px;" width="15" height="16" viewBox="0 0 15 16"><path d="M1 0.750h7.500l3.500 3.500V14.250H1z" fill="#fff" stroke="#1d8fd8" stroke-width="1.400"/><rect x="8.500" y="8.500" width="5.500" height="7" fill="#ef3b24"/><rect x="10.600" y="9.800" width="1.300" height="2.800" fill="#fff"/><rect x="10.600" y="13.300" width="1.300" height="1.200" fill="#fff"/></svg>
<svg style="left:29px;top:497px;" width="14" height="15" viewBox="0 0 14 15"><path d="M1 0.750h7.500l3.500 3.500V14.250H1z" fill="#fff" stroke="#1d8fd8" stroke-width="1.400"/><text x="6.500" y="11.500" font-size="6" font-family="Liberation Sans,sans-serif" font-weight="bold" fill="#1d8fd8" text-anchor="middle">(x)</text></svg>
<!-- result side tabs -->
<div style="left:26px;top:584px;width:21px;height:61px;background:#e9ece9;border:1px solid #c2c2c2"></div>
<div class="t" style="left:6px;top:599px;width:60px;height:16px;line-height:16px;text-align:center;transform:rotate(-90deg);"><span class="c">网格</span></div>
<svg style="left:28px;top:622px;" width="16" height="16" viewBox="0 0 16 16"><rect x="0.750" y="0.750" width="14" height="14" fill="#fff" stroke="#1d8fd8" stroke-width="1.500"/><path d="M5.500 1v14M10 1v14M1 5.500h14M1 10h14" stroke="#1d8fd8" stroke-width="1.200"/></svg>
<div class="t" style="left:6px;top:662px;width:60px;height:16px;line-height:16px;text-align:center;transform:rotate(-90deg);"><span class="c">文本</span></div>
<svg style="left:29px;top:689px;" width="14" height="12" viewBox="0 0 14 12"><path d="M1 1.500v9M0 1.500h2M0 10.500h2" stroke="#1d8fd8" stroke-width="1.200" fill="none" transform="rotate(-90 7 6)"/><path d="M6 3.500l-2.500 2.500 2.500 2.500M8.500 3.500l2.500 2.500-2.500 2.500" fill="none" stroke="#1d8fd8" stroke-width="1.400" transform="rotate(-90 7 6)"/></svg>
<div class="t" style="left:6px;top:754px;width:60px;height:16px;line-height:16px;text-align:center;transform:rotate(-90deg);"><span class="c">记录</span></div>
<svg style="left:28px;top:778px;" width="16" height="15" viewBox="0 0 16 15"><path d="M1 13.500V4.500h4v-2h5.500" fill="none" stroke="#1d8fd8" stroke-width="1.500"/><path d="M1 13.500h12.500V8" fill="none" stroke="#1d8fd8" stroke-width="1.500"/><circle cx="12.500" cy="3.800" r="3" fill="#1d8fd8"/><rect x="11.900" y="2" width="1.200" height="3.500" fill="#fff"/></svg>
<!-- result toolbar -->
<svg style="left:58px;top:808px;" width="17" height="17" viewBox="0 0 17 17"><path d="M3.200 10.500a5.500 5.500 0 0 1 8.500-6.300M13.800 6.500a5.500 5.500 0 0 1-8.500 6.300" fill="none" stroke="#1d8fd8" stroke-width="1.600"/><path d="M9.500 1l4 3-4.500 2zM7.500 16l-4-3 4.500-2z" fill="#1d8fd8"/><path d="M5.500 7l3-1.500M8.500 11.500l3-1.500" stroke="#1d8fd8" stroke-width="1.300"/></svg>
<div class="t" style="left:79px;top:807.3px;height:20px;line-height:20px;"><span class="c">刷新</span></div>
<svg style="left:117px;top:815px;" width="7" height="5" viewBox="0 0 7 5"><path d="M0 0h7L3.500 4.300z" fill="#1a1a1a"/></svg>
<svg style="left:134px;top:810px;" width="2" height="16" viewBox="0 0 2 16"><rect x="0" y="0" width="2" height="2" fill="#c9c1a9"/><rect x="0" y="4" width="2" height="2" fill="#c9c1a9"/><rect x="0" y="8" width="2" height="2" fill="#c9c1a9"/><rect x="0" y="12" width="2" height="2" fill="#c9c1a9"/></svg>
<svg style="left:145px;top:809px;" width="16" height="16" viewBox="0 0 16 16"><circle cx="8" cy="8" r="6.800" fill="none" stroke="#a4a4a4" stroke-width="1.300"/><path d="M4.500 8l2.500 2.800 4.500-5" fill="none" stroke="#a4a4a4" stroke-width="1.300"/></svg>
<div class="t" style="left:166px;top:807.3px;height:20px;line-height:20px;color:#a0a0a0"><span class="c">保存</span></div>
<svg style="left:204px;top:815px;" width="7" height="5" viewBox="0 0 7 5"><path d="M0 0h7L3.500 4.300z" fill="#606060"/></svg>
<svg style="left:221px;top:811px;" width="13" height="13" viewBox="0 0 13 13"><rect x="0.600" y="0.600" width="11.500" height="11.500" fill="none" stroke="#a4a4a4" stroke-width="1.100"/><path d="M3.500 3.500l6 6M9.500 3.500l-6 6" stroke="#a4a4a4" stroke-width="1.100"/></svg>
<div class="t" style="left:239px;top:807.3px;height:20px;line-height:20px;color:#a0a0a0"><span class="c">取消</span></div>
<div style="left:273px;top:804px;width:1px;height:27px;background:#707070"></div>
<svg style="left:283px;top:810px;" width="16" height="15" viewBox="0 0 16 15"><path d="M1 2h13M1 6.500h9M1 11h6" stroke="#1d8fd8" stroke-width="1.700"/><path d="M8.500 14l1-3 5-5 1.500 1.500-5 5z" fill="#1d8fd8"/></svg>
<svg style="left:307px;top:810px;" width="16" height="15" viewBox="0 0 16 15"><path d="M1 2h13M1 6.500h6M1 11h6M8.500 9h7M12 5.500v7" stroke="#a4a4a4" stroke-width="1.600"/></svg>
<svg style="left:331px;top:810px;" width="16" height="15" viewBox="0 0 16 15"><path d="M1 2h13M1 6.500h3M1 11h3" stroke="#a4a4a4" stroke-width="1.600"/><circle cx="10.500" cy="9" r="4" fill="none" stroke="#a4a4a4" stroke-width="1.100"/><path d="M8.500 9h4M10.500 7v4" stroke="#a4a4a4" stroke-width="1.100"/></svg>
<svg style="left:355px;top:810px;" width="16" height="15" viewBox="0 0 16 15"><path d="M1 2h13M1 6.500h4M7 6.500h8M1 11h6" stroke="#a4a4a4" stroke-width="1.600"/></svg>
<svg style="left:379px;top:810px;" width="2" height="16" viewBox="0 0 2 16"><rect x="0" y="0" width="2" height="2" fill="#c9c1a9"/><rect x="0" y="4" width="2" height="2" fill="#c9c1a9"/><rect x="0" y="8" width="2" height="2" fill="#c9c1a9"/><rect x="0" y="12" width="2" height="2" fill="#c9c1a9"/></svg>
<svg style="left:387px;top:809px;" width="12" height="15" viewBox="0 0 12 15"><path d="M1.500 1.500v12" stroke="#a4a4a4" stroke-width="1.700"/><path d="M10.500 1.500l-6 6 6 6" fill="none" stroke="#a4a4a4" stroke-width="2.100"/></svg>
<svg style="left:411px;top:809px;" width="12" height="15" viewBox="0 0 12 15"><path d="M8 1.500l-6 6 6 6" fill="none" stroke="#a4a4a4" stroke-width="2.100"/></svg>
<svg style="left:435px;top:809px;" width="12" height="15" viewBox="0 0 12 15"><path d="M2 1.500l6 6-6 6" fill="none" stroke="#1d8fd8" stroke-width="2.100"/></svg>
<svg style="left:457px;top:809px;" width="12" height="15" viewBox="0 0 12 15"><path d="M10.500 1.500v12" stroke="#1d8fd8" stroke-width="1.700"/><path d="M1.500 1.500l6 6-6 6" fill="none" stroke="#1d8fd8" stroke-width="2.100"/></svg>
<svg style="left:479px;top:809px;" width="15" height="15" viewBox="0 0 15 15"><path d="M1 4.500V1h3.500M10.500 1H14v3.500M14 10.500V14h-3.500M4.500 14H1v-3.500" fill="none" stroke="#1d8fd8" stroke-width="1.500"/><rect x="4.500" y="4" width="6" height="7" fill="#1d8fd8"/></svg>
<svg style="left:502px;top:810px;" width="2" height="16" viewBox="0 0 2 16"><rect x="0" y="0" width="2" height="2" fill="#c9c1a9"/><rect x="0" y="4" width="2" height="2" fill="#c9c1a9"/><rect x="0" y="8" width="2" height="2" fill="#c9c1a9"/><rect x="0" y="12" width="2" height="2" fill="#c9c1a9"/></svg>
<svg style="left:516px;top:809px;" width="15" height="16" viewBox="0 0 15 16"><path d="M1 9.500v5h12.500v-5" fill="none" stroke="#1d8fd8" stroke-width="1.500"/><path d="M7.250 11V2" stroke="#1d8fd8" stroke-width="1.600"/><path d="M3.800 5l3.450-3.500L10.700 5" fill="none" stroke="#1d8fd8" stroke-width="1.600"/></svg>
<div class="t" style="left:536px;top:807.3px;height:20px;line-height:20px;"><span class="c">导出数据</span>...</div>
<svg style="left:607px;top:815px;" width="7" height="5" viewBox="0 0 7 5"><path d="M0 0h7L3.500 4.300z" fill="#1a1a1a"/></svg>
<svg style="left:624px;top:810px;" width="2" height="16" viewBox="0 0 2 16"><rect x="0" y="0" width="2" height="2" fill="#c9c1a9"/><rect x="0" y="4" width="2" height="2" fill="#c9c1a9"/><rect x="0" y="8" width="2" height="2" fill="#c9c1a9"/><rect x="0" y="12" width="2" height="2" fill="#c9c1a9"/></svg>
<svg style="left:631px;top:808.5px;" width="16" height="16" viewBox="0 0 16 16.500"><path d="M8 0.800l1.300 0.200.5 1.900 1.300.6 1.700-1 1.700 1.700-1 1.700.6 1.300 1.900.5v2.400l-1.900.5-.6 1.300 1 1.700-1.700 1.700-1.700-1-1.300.6-.5 1.900H6.700l-.5-1.900-1.300-.6-1.700 1-1.700-1.700 1-1.700-.6-1.300L0 9.300V6.900l1.900-.5.6-1.300-1-1.700 1.700-1.700 1.700 1 1.300-.6.500-1.900z" fill="#1d8fd8"/><circle cx="8" cy="8.100" r="2.600" fill="#f6f6f6"/></svg>
<div style="left:654px;top:806px;width:54px;height:23px;background:#fff;border:1px solid #7a7a7a"></div>
<div class="t n" style="left:658px;top:807.3px;height:20px;line-height:20px;">200</div>
<svg style="left:715px;top:809px;" width="16" height="16" viewBox="0 0 16 16"><path d="M1 10.500v4h13.500v-4" fill="none" stroke="#1d8fd8" stroke-width="1.500"/><path d="M3 1.500l4.750 5 4.750-5M7.750 6.500v5" fill="none" stroke="#1d8fd8" stroke-width="1.500"/></svg>
<div class="t n" style="left:737px;top:807.3px;height:20px;line-height:20px;">363</div>
<svg style="left:765px;top:810px;" width="2" height="16" viewBox="0 0 2 16"><rect x="0" y="0" width="2" height="2" fill="#c9c1a9"/><rect x="0" y="4" width="2" height="2" fill="#c9c1a9"/><rect x="0" y="8" width="2" height="2" fill="#c9c1a9"/><rect x="0" y="12" width="2" height="2" fill="#c9c1a9"/></svg>
<svg style="left:793px;top:817px;" width="9" height="2" viewBox="0 0 9 2"><rect x="0" y="0" width="2" height="1.500" fill="#5a7a9a"/><rect x="3" y="0" width="2" height="1.500" fill="#5a7a9a"/><rect x="6" y="0" width="2" height="1.500" fill="#5a7a9a"/></svg>
<div class="t" style="left:812px;top:807.3px;height:20px;line-height:20px;letter-spacing:-0.07px;">200 <span class="c">行已获取</span> - 3.119s (4ms <span class="c">获取</span>), 2025-10-21 20:21:58</div>
<svg style="left:1577px;top:816px;" width="17" height="17" viewBox="0 0 17 17"><rect x="0.500" y="1" width="4.500" height="14.500" rx="1.200" fill="#1d8fd8"/><rect x="6.500" y="11.500" width="9.500" height="4" rx="1" fill="#1d8fd8"/><path d="M14.800 9.500c0-4-3-6-7-4.500" fill="none" stroke="#1d8fd8" stroke-width="1.700"/><path d="M6 6.500l4.200-4 .8 5z" fill="#1d8fd8"/></svg>
<!-- status bar -->
<div style="left:778px;top:836px;width:1px;height:20px;background:#a8a8a8"></div>
<div style="left:814px;top:836px;width:1px;height:20px;background:#a8a8a8"></div>
<div style="left:841px;top:836px;width:1px;height:20px;background:#a8a8a8"></div>
<div style="left:975px;top:836px;width:1px;height:20px;background:#a8a8a8"></div>
<div style="left:1103px;top:836px;width:1px;height:20px;background:#a8a8a8"></div>
<div style="left:1231px;top:836px;width:1px;height:20px;background:#a8a8a8"></div>
<div class="t" style="left:786px;top:834.5px;height:20px;line-height:20px;letter-spacing:-1.33px;">CST</div>
<div class="t" style="left:822px;top:834.5px;height:20px;line-height:20px;letter-spacing:-0.37px;">zh</div>
<div class="t" style="left:849px;top:834.5px;height:20px;line-height:20px;"><span class="c">可写</span></div>
<div class="t" style="left:983px;top:834.5px;height:20px;line-height:20px;"><span class="c">智能插入</span></div>
<div class="t" style="left:1111px;top:834.5px;height:20px;line-height:20px;letter-spacing:-0.12px;">1474 : 1 : 61258</div>
<div class="t" style="left:1239px;top:834.5px;height:20px;line-height:20px;letter-spacing:-0.21px;">Sel: 0 | 0</div>
<svg style="left:1315px;top:841px;" width="2" height="16" viewBox="0 0 2 16"><rect x="0" y="0" width="2" height="2" fill="#c9c1a9"/><rect x="0" y="4" width="2" height="2" fill="#c9c1a9"/><rect x="0" y="8" width="2" height="2" fill="#c9c1a9"/><rect x="0" y="12" width="2" height="2" fill="#c9c1a9"/></svg>
<!-- taskbar -->
<div style="left:294px;top:860px;width:48px;height:40px;background:#333"></div>
<div style="left:294px;top:897px;width:48px;height:3px;background:#76b9ed"></div>
<svg style="left:15px;top:872px;" width="18" height="17" viewBox="0 0 18 17"><path d="M0.500 2.700l6.800-1v6.300H0.500zM8.300 1.600L17 0.300V8H8.300zM0.500 9h6.800v6.300l-6.800-1zM8.300 9H17v7.700l-8.700-1.300z" fill="#fff"/></svg>
<svg style="left:63px;top:871px;" width="18" height="18" viewBox="0 0 18 18"><circle cx="10.800" cy="6.800" r="5.300" fill="none" stroke="#fff" stroke-width="1.500"/><path d="M7 10.800L1 17" stroke="#fff" stroke-width="1.600"/></svg>
<svg style="left:110px;top:871px;" width="19" height="18" viewBox="0 0 19 18"><rect x="2.500" y="5" width="10" height="8.500" fill="none" stroke="#fff" stroke-width="1.400"/><path d="M1 1.500h3M1 16.500h3M11 1.500h3M11 16.500h3M1 1v2.500M14 1v2.500M1 14.500V17M14 14.500V17" stroke="#fff" stroke-width="1.300"/><path d="M16.500 3v2M16.500 7.500v9" stroke="#fff" stroke-width="1.600"/></svg>
<svg style="left:157px;top:864px;" width="30" height="30" viewBox="0 0 30 30"><text x="14.500" y="26.300" font-family="Liberation Sans,sans-serif" font-weight="bold" font-size="40" fill="#2a9ee8" text-anchor="middle">e</text><path d="M25.500 5C18 0.500 5.500 9 4 21c-.5 3.500.8 5.500 3 5.500" fill="none" stroke="#f2c21a" stroke-width="2"/></svg>
<svg style="left:208px;top:870px;" width="24" height="20" viewBox="0 0 24 20"><path d="M1 1.500h7.500l1.500 2h12.500v15H1z" fill="#f5d67a"/><path d="M1 4.500h22v14H1z" fill="#fbe39c"/><path d="M5 11h14v8h-3.500v-4.500h-7V19H5z" fill="#2a9df4"/><path d="M2.500 2.500h4" stroke="#7cc8f0" stroke-width="1"/></svg>
<svg style="left:256px;top:867px;" width="26" height="26" viewBox="0 0 26 26"><g transform="translate(13,13) scale(1)"><circle r="11.400" fill="#f7f5f3" stroke="#3fb3b3" stroke-width="1.700"/><path d="M-4.500 10.500C-5.500 5-3.500 0 1-1.800L3 1.800 5.800-1.500l2 1.500C7.500 4 6.800 7.500 5.800 9.800 2.500 12-1.500 12-4.500 10.500z" fill="#2e2620"/><path d="M3.300-5.800C6-7.300 9-6 9-4 7.500-2.300 5-2.300 2.800-3.800z" fill="#2e2620"/><path d="M-1.200-4.800l2.700-1.200.3 1.500z" fill="#2e2620"/><path d="M-7.500 5C-9.500-2-4.500-8.500 2.500-8.500" stroke="#c9c4c0" fill="none" stroke-width="0.800"/><path d="M5.500 2.500l.8 3M3.500 4.500l.5 2" stroke="#f7f5f3" stroke-width="0.900"/></g></svg>
<svg style="left:305px;top:867px;" width="26" height="26" viewBox="0 0 26 26"><g transform="translate(13,13) scale(1)"><circle r="11.400" fill="#f7f5f3" stroke="#3fb3b3" stroke-width="1.700"/><path d="M-4.500 10.500C-5.500 5-3.500 0 1-1.800L3 1.800 5.800-1.500l2 1.500C7.500 4 6.800 7.500 5.800 9.800 2.500 12-1.500 12-4.500 10.500z" fill="#2e2620"/><path d="M3.300-5.800C6-7.300 9-6 9-4 7.500-2.300 5-2.300 2.800-3.800z" fill="#2e2620"/><path d="M-1.200-4.800l2.700-1.200.3 1.500z" fill="#2e2620"/><path d="M-7.500 5C-9.500-2-4.500-8.500 2.500-8.500" stroke="#c9c4c0" fill="none" stroke-width="0.800"/><path d="M5.500 2.500l.8 3M3.500 4.500l.5 2" stroke="#f7f5f3" stroke-width="0.900"/></g></svg>
<svg style="left:1px;top:3px;" width="18" height="18" viewBox="0 0 18 18"><g transform="translate(9,9) scale(0.666667)"><circle r="11.400" fill="#f7f5f3" stroke="#3fb3b3" stroke-width="1.700"/><path d="M-4.500 10.500C-5.500 5-3.500 0 1-1.800L3 1.800 5.800-1.500l2 1.500C7.500 4 6.800 7.500 5.800 9.800 2.500 12-1.500 12-4.500 10.500z" fill="#2e2620"/><path d="M3.300-5.800C6-7.300 9-6 9-4 7.500-2.300 5-2.300 2.800-3.800z" fill="#2e2620"/><path d="M-1.200-4.800l2.700-1.200.3 1.500z" fill="#2e2620"/><path d="M-7.500 5C-9.500-2-4.500-8.500 2.500-8.500" stroke="#c9c4c0" fill="none" stroke-width="0.800"/><path d="M5.500 2.500l.8 3M3.500 4.500l.5 2" stroke="#f7f5f3" stroke-width="0.900"/></g></svg>
<svg style="left:1347px;top:875px;" width="14" height="9" viewBox="0 0 14 9"><path d="M1 8l6-6.500L13 8" fill="none" stroke="#fff" stroke-width="1.500"/></svg>
<svg style="left:1372px;top:871px;" width="14" height="18" viewBox="0 0 14 18"><rect x="2.500" y="0.750" width="5" height="4" fill="none" stroke="#fff" stroke-width="1.100"/><rect x="1.200" y="4.750" width="7.600" height="11" rx="1" fill="none" stroke="#fff" stroke-width="1.100"/><path d="M8.500 14.500l2 2 3-4" fill="none" stroke="#fff" stroke-width="1.100"/></svg>
<svg style="left:1393px;top:873px;" width="17" height="15" viewBox="0 0 17 15"><rect x="3.500" y="0.750" width="12.500" height="9" fill="none" stroke="#fff" stroke-width="1.200"/><path d="M9.750 10v3.500M5.500 13.750h8.500" stroke="#fff" stroke-width="1.200"/><rect x="0.600" y="0.600" width="4" height="5" fill="#000" stroke="#fff" stroke-width="1"/><path d="M2.600 5.500v3" stroke="#fff" stroke-width="1"/></svg>
<svg style="left:1417px;top:872px;" width="18" height="17" viewBox="0 0 18 17"><path d="M1 6h3l4-4v13l-4-4H1z" fill="none" stroke="#fff" stroke-width="1.100"/><path d="M10.500 5.500c1.500 1.500 1.500 4.500 0 6M12.800 3.500c2.600 2.600 2.600 7.400 0 10M15 1.500c3.500 4 3.500 10 0 14" fill="none" stroke="#fff" stroke-width="1"/></svg>
<div class="t" style="left:1443px;top:870px;height:20px;line-height:20px;color:#fff;font-size:12.5px;letter-spacing:-0.70px;">ENG</div>
<div class="t" style="left:1495px;top:860.5px;height:20px;line-height:20px;color:#fff;font-size:12.5px;letter-spacing:-0.26px;">20:22</div>
<div class="t" style="left:1477px;top:879.5px;height:20px;line-height:20px;color:#fff;font-size:12.5px;letter-spacing:0.24px;">2025/10/21</div>
<svg style="left:1559px;top:872px;" width="26" height="26" viewBox="0 0 26 26"><path d="M0.500 0.500h15.500v11H9l-3.500 3.500V11.500H0.500z" fill="#fff"/><path d="M3 3.500h10.500M3 6h10.500M3 8.500h10.500" stroke="#000" stroke-width="0.900"/><circle cx="15.600" cy="14.800" r="7.600" fill="#3c3c3c" stroke="#000" stroke-width="1.200"/><text x="15.600" y="19" font-family="Liberation Sans,sans-serif" font-weight="bold" font-size="12" fill="#fff" text-anchor="middle">1</text></svg>
<div style="left:1595px;top:860px;width:1px;height:40px;background:#5a5a5a"></div>
<!-- sash -->
<svg style="left:793.5px;top:526px;" width="14" height="4.5" viewBox="0 0 14 4.5"><path d="M0 4.500L7 0l7 4.500z" fill="#2488cc"/></svg>
<svg style="left:814.5px;top:526px;" width="14" height="4.5" viewBox="0 0 14 4.5"><path d="M0 0h14L7 4.500z" fill="#2488cc"/></svg>
<!-- result tab icons -->
<svg style="left:30px;top:537px;" width="12" height="13" viewBox="0 0 12 13"><path d="M0.500 0.500h8l3 3v9h-11z" fill="#1d8fd8"/><path d="M0.500 4h11M0.500 7h11M0.500 10h11M3.800 1v12M7.500 1v12" stroke="#fff" stroke-width="0.900"/></svg>
<svg style="left:79px;top:539px;" width="10" height="10" viewBox="0 0 10 10"><path d="M0.500 0.500l9 9M9.500 0.500l-9 9" stroke="#1a1a1a" stroke-width="1.100"/></svg>
<svg style="left:31px;top:563px;" width="16" height="12" viewBox="0 0 16 12"><path d="M3 3.500L0.800 6 3 8.500M5 3.500L7.200 6 5 8.500" fill="none" stroke="#1d8fd8" stroke-width="1.200"/><path d="M7.500 1.500h8M7.500 1.500v2M15.500 1.500v2M11.500 1.500v9.500M10 11h3" fill="none" stroke="#1d8fd8" stroke-width="1.100"/></svg>
<div style="left:418px;top:561px;width:1px;height:16px;background:#9a9a9a"></div>
<svg style="left:423px;top:561px;" width="16" height="16" viewBox="0 0 16 16"><path d="M1 5.500V1h4.500M10.500 1H15v4.500M15 10.500V15h-4.500M5.500 15H1v-4.500M1 1l4.500 4.500M15 1l-4.500 4.500M15 15l-4.500-4.500M1 15l4.500-4.500" fill="none" stroke="#555" stroke-width="1.300"/></svg>
<svg style="left:1385px;top:563px;" width="8" height="12" viewBox="0 0 8 12"><path d="M0.500 0.500l6.500 5.500-6.500 5.500z" fill="#707070"/></svg>
<div style="left:1402px;top:561px;width:1px;height:16px;background:#9a9a9a"></div>
<svg style="left:1407px;top:566px;" width="10" height="6" viewBox="0 0 10 6"><path d="M0 0h10L5 5.500z" fill="#606060"/></svg>
<svg style="left:1433px;top:560px;" width="17" height="17" viewBox="0 0 17 17"><g transform="rotate(-45 8 8.500)"><rect x="1.500" y="5.200" width="13" height="6.600" rx="1.600" fill="none" stroke="#a4a4a4" stroke-width="1.300"/><rect x="7" y="5.200" width="7.500" height="6.600" rx="1.200" fill="#a4a4a4"/></g><path d="M10.500 15h5" stroke="#a4a4a4" stroke-width="1.200"/></svg>
<svg style="left:1455px;top:561px;" width="16" height="15" viewBox="0 0 16 15"><path d="M0.800 0.800h11L7.500 6.500v7l-2.500-2V6.500z" fill="none" stroke="#a4a4a4" stroke-width="1.300"/><rect x="10.500" y="9.500" width="4" height="4" fill="none" stroke="#a4a4a4" stroke-width="1.100"/></svg>
<svg style="left:1480px;top:561px;" width="13" height="15" viewBox="0 0 13 15"><path d="M0.300 0.500h12.400L8 6.500v8l-3.300-2.500V6.500z" fill="#1d8fd8"/></svg>
<svg style="left:1499px;top:562px;" width="2" height="16" viewBox="0 0 2 16"><rect x="0" y="0" width="2" height="2" fill="#c9c1a9"/><rect x="0" y="4" width="2" height="2" fill="#c9c1a9"/><rect x="0" y="8" width="2" height="2" fill="#c9c1a9"/><rect x="0" y="12" width="2" height="2" fill="#c9c1a9"/></svg>
<svg style="left:1511px;top:563px;" width="15" height="10" viewBox="0 0 15 10"><path d="M0.500 5L6 0.500v3h8.500v3H6v3z" fill="#a4a4a4"/></svg>
<svg style="left:1534px;top:567px;" width="7" height="5" viewBox="0 0 7 5"><path d="M0 0h7L3.500 4.300z" fill="#707070"/></svg>
<svg style="left:1551px;top:563px;" width="15" height="10" viewBox="0 0 15 10"><path d="M14.500 5L9 0.500v3H0.500v3H9v3z" fill="#a4a4a4"/></svg>
<svg style="left:1574px;top:567px;" width="7" height="5" viewBox="0 0 7 5"><path d="M0 0h7L3.500 4.300z" fill="#707070"/></svg>
<!-- right strip -->
<svg style="left:1579px;top:593px;" width="16" height="15" viewBox="0 0 16 15"><rect x="1.500" y="0.750" width="13.500" height="12" fill="none" stroke="#1d8fd8" stroke-width="1.500"/><rect x="8" y="0.750" width="7" height="8.500" fill="#6cc4f0"/><path d="M1.500 9.500h6.500" stroke="#1d8fd8" stroke-width="1.300"/><circle cx="3.500" cy="11.500" r="2.800" fill="#1d8fd8"/><circle cx="3.500" cy="11.500" r="1" fill="#f6f6f6"/></svg>
<div class="t" style="left:1556px;top:613px;width:60px;height:16px;line-height:16px;text-align:center;transform:rotate(90deg);"><span class="c">面板</span></div>
<svg style="left:1578px;top:651px;" width="15" height="15" viewBox="0 0 15 15"><rect x="0.750" y="0.750" width="13.500" height="13.500" fill="#fff" stroke="#1d8fd8" stroke-width="1.500"/><path d="M1 1h13v7.500H1z" fill="#1d8fd8"/><path d="M2.500 2.500h2v2h-2zM6.500 2.500h2v2h-2zM10.500 2.500h2v2h-2zM4.500 4.500h2v2h-2zM8.500 4.500h2v2h-2z" fill="#fff"/></svg>
<svg style="left:1577px;top:672px;" width="17" height="17" viewBox="0 0 17 17"><circle cx="8.500" cy="8.500" r="7.200" fill="none" stroke="#1d8fd8" stroke-width="1.400"/><path d="M5.500 5.500h2v2h-2zM9.500 5.500h2v2h-2zM5.500 9.500h2v2h-2zM9.500 9.500h2v2h-2z" fill="#1d8fd8"/></svg>
<svg style="left:1578px;top:695px;" width="15" height="16" viewBox="0 0 15 16"><path d="M7.500 0v4M5.500 2h4" stroke="#ee7f12" stroke-width="1.300"/><rect x="0.750" y="4.750" width="13.500" height="10.500" fill="#fff" stroke="#1d8fd8" stroke-width="1.500"/><path d="M1 5h13v3H1z" fill="#1d8fd8"/><path d="M5.500 8v7M10 8v7M1 11.500h13" stroke="#1d8fd8" stroke-width="1.100"/></svg>
<svg style="left:1578px;top:717px;" width="15" height="15" viewBox="0 0 15 15"><path d="M0.750 12V0.750h13.500V8" fill="none" stroke="#1d8fd8" stroke-width="1.500"/><path d="M1 1h13v3H1z" fill="#1d8fd8"/><path d="M0.750 12h7M9 14h5.500M12 11l2.800 3-2.800 0" fill="none" stroke="#1d8fd8" stroke-width="1.400"/></svg>
<svg style="left:1578px;top:738px;" width="15" height="17" viewBox="0 0 15 17"><rect x="0.750" y="1" width="5" height="5" fill="none" stroke="#1d8fd8" stroke-width="1.400"/><circle cx="11" cy="3.500" r="2.700" fill="none" stroke="#1d8fd8" stroke-width="1.400"/><circle cx="3.300" cy="12.500" r="2.700" fill="none" stroke="#1d8fd8" stroke-width="1.400"/><path d="M8.500 10l5 5M13.500 10l-5 5" stroke="#ee7f12" stroke-width="1.500"/></svg>
<svg style="left:53px;top:587px;" width="8" height="10" viewBox="0 0 8 10"><path d="M2 5V3a2 2 0 0 1 4 0v2" fill="none" stroke="#f4b21c" stroke-width="1.300"/><rect x="0.500" y="4" width="7" height="5.500" rx="0.800" fill="#f4b21c"/></svg>
<!-- watermark -->
<div style="left:0;top:0;width:1600px;height:860px;overflow:hidden;pointer-events:none">
<div class="wm" style="left:7px;top:131.5px">audit<span class="wc">审计</span>01(Audit1)<br>audit-172.18.210.237</div>
<div class="wm" style="left:307px;top:131.5px">audit<span class="wc">审计</span>01(Audit1)<br>audit-172.18.210.237</div>
<div class="wm" style="left:607px;top:131.5px">audit<span class="wc">审计</span>01(Audit1)<br>audit-172.18.210.237</div>
<div class="wm" style="left:907px;top:131.5px">audit<span class="wc">审计</span>01(Audit1)<br>audit-172.18.210.237</div>
<div class="wm" style="left:1207px;top:131.5px">audit<span class="wc">审计</span>01(Audit1)<br>audit-172.18.210.237</div>
<div class="wm" style="left:1507px;top:131.5px">audit<span class="wc">审计</span>01(Audit1)<br>audit-172.18.210.237</div>
<div class="wm" style="left:7px;top:431.5px">audit<span class="wc">审计</span>01(Audit1)<br>audit-172.18.210.237</div>
<div class="wm" style="left:307px;top:431.5px">audit<span class="wc">审计</span>01(Audit1)<br>audit-172.18.210.237</div>
<div class="wm" style="left:607px;top:431.5px">audit<span class="wc">审计</span>01(Audit1)<br>audit-172.18.210.237</div>
<div class="wm" style="left:907px;top:431.5px">audit<span class="wc">审计</span>01(Audit1)<br>audit-172.18.210.237</div>
<div class="wm" style="left:1207px;top:431.5px">audit<span class="wc">审计</span>01(Audit1)<br>audit-172.18.210.237</div>
<div class="wm" style="left:1507px;top:431.5px">audit<span class="wc">审计</span>01(Audit1)<br>audit-172.18.210.237</div>
<div class="wm" style="left:7px;top:731.5px">audit<span class="wc">审计</span>01(Audit1)<br>audit-172.18.210.237</div>
<div class="wm" style="left:307px;top:731.5px">audit<span class="wc">审计</span>01(Audit1)<br>audit-172.18.210.237</div>
<div class="wm" style="left:607px;top:731.5px">audit<span class="wc">审计</span>01(Audit1)<br>audit-172.18.210.237</div>
<div class="wm" style="left:907px;top:731.5px">audit<span class="wc">审计</span>01(Audit1)<br>audit-172.18.210.237</div>
<div class="wm" style="left:1207px;top:731.5px">audit<span class="wc">审计</span>01(Audit1)<br>audit-172.18.210.237</div>
<div class="wm" style="left:1507px;top:731.5px">audit<span class="wc">审计</span>01(Audit1)<br>audit-172.18.210.237</div>
</div>
</body></html>
